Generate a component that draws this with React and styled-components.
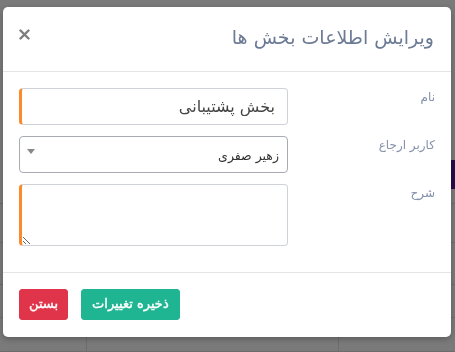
import React from 'react';
import styled, { createGlobalStyle } from 'styled-components';

const GlobalStyle = createGlobalStyle`
  html, body {
    margin: 0;
    padding: 0;
    background: #f4f4f4;
    font-family: "DejaVu Sans", "Noto Sans", sans-serif;
  }
  * { box-sizing: border-box; }
`;

// the page behind the modal, only a faint table shows through
const Page = styled.div`
  height: 352px;
  overflow: hidden;
  background: #f4f4f4;
  display: flex;
  flex-direction: column;
`;
const PageBar = styled.div`
  height: 35px;
  margin: 160px 0 0 380px;
  background: #4a1d96;
`;
const TableRow = styled.div`
  display: grid;
  grid-template-columns: 86px 252px 1fr;
  height: ${props => props.h}px;
  border-bottom: 1px solid #d8d8d8;
  & > div + div { border-left: 1px solid #d8d8d8; }
`;

const Backdrop = styled.div`
  position: fixed;
  inset: 0;
  background: rgba(0, 0, 0, 0.5);
`;
const Modal = styled.div`
  position: absolute;
  left: 3px;
  top: 7px;
  width: 448px;
  direction: rtl;
  background: #fff;
  border-radius: 5px;
  box-shadow: 0 2px 6px rgba(0, 0, 0, 0.25);
  display: flex;
  flex-direction: column;
`;
const Header = styled.div`
  height: 65px;
  padding: 0 17px 4px 16px;
  display: flex;
  align-items: center;
  justify-content: space-between;
  border-bottom: 1px solid #e5e5e5;
`;
const Title = styled.h4`
  margin: 0;
  font-size: 19px;
  font-weight: normal;
  color: #6b7a95;
`;
const CloseX = styled.button`
  border: 0;
  background: none;
  padding: 0;
  width: 11px;
  height: 11px;
  margin-bottom: 6px;
  display: flex;
  cursor: pointer;
`;
const Body = styled.div`
  padding: 16px 16px 26px;
  display: flex;
  flex-direction: column;
  gap: 11px;
`;
const Row = styled.div`
  display: grid;
  grid-template-columns: 1fr 269px;
  column-gap: 12px;
`;
const Label = styled.label`
  font-size: 12px;
  color: #8391aa;
  padding-top: 2px;
`;
const TextInput = styled.input`
  height: 37px;
  width: 100%;
  border: 1px solid #cfd3d8;
  border-left: 3px solid #fd8a2a;
  border-radius: 4px;
  padding: 0 12px;
  font-family: inherit;
  font-size: 16px;
  color: #444;
  direction: rtl;
  outline: none;
`;
const SelectBox = styled.div`
  position: relative;
  height: 37px;
  border: 1px solid #a8acb2;
  border-radius: 4px;
  display: flex;
  align-items: center;
  padding: 2px 8px 0;
  font-size: 12.5px;
  color: #333;
`;
const Caret = styled.span`
  position: absolute;
  left: 7px;
  top: 12px;
  width: 0;
  height: 0;
  border-left: 4px solid transparent;
  border-right: 4px solid transparent;
  border-top: 5px solid #888;
`;
const TextArea = styled.textarea`
  height: 62px;
  width: 100%;
  resize: vertical;
  border: 1px solid #cfd3d8;
  border-left: 3px solid #fd8a2a;
  border-radius: 4px;
  font-family: inherit;
  font-size: 14px;
  direction: rtl;
  outline: none;
  display: block;
`;
const Footer = styled.div`
  height: 65px;
  border-top: 1px solid #e5e5e5;
  padding: 0 16px 1px;
  display: flex;
  align-items: center;
  justify-content: flex-end;
  gap: 13px;
`;
const Button = styled.button`
  height: 31px;
  padding: 0 ${props => props.px}px 2px;
  border: 1px solid ${props => props.bg};
  border-radius: 3px;
  background: ${props => props.bg};
  color: #fff;
  font-family: inherit;
  font-weight: normal;
  font-size: 13px;
  -webkit-text-stroke: 0.4px #fff;
  cursor: pointer;
`;

export default function App() {
  return (
    <>
      <GlobalStyle />
      <Page>
        <PageBar />
        {[17, 47, 49, 40, 40].map((h, i) => (
          <TableRow key={i} h={h}>
            <div />
            <div />
            <div />
          </TableRow>
        ))}
      </Page>
      <Backdrop>
        <Modal>
          <Header>
            <Title>ویرایش اطلاعات بخش ها</Title>
            <CloseX aria-label="close">
              <svg width="11" height="11" viewBox="0 0 11 11">
                <path d="M1.5 1.5 L9.5 9.5 M9.5 1.5 L1.5 9.5" stroke="#7d7d7d" strokeWidth="2.4" strokeLinecap="round" />
              </svg>
            </CloseX>
          </Header>
          <Body>
            <Row>
              <Label>نام</Label>
              <TextInput defaultValue="بخش پشتیبانی" />
            </Row>
            <Row>
              <Label>کاربر ارجاع</Label>
              <SelectBox>
                زهیر صفری
                <Caret />
              </SelectBox>
            </Row>
            <Row>
              <Label>شرح</Label>
              <TextArea />
            </Row>
          </Body>
          <Footer>
            <Button bg="#20b592" px={10}>ذخیره تغییرات</Button>
            <Button bg="#e0344b" px={9}>بستن</Button>
          </Footer>
        </Modal>
      </Backdrop>
    </>
  );
}
